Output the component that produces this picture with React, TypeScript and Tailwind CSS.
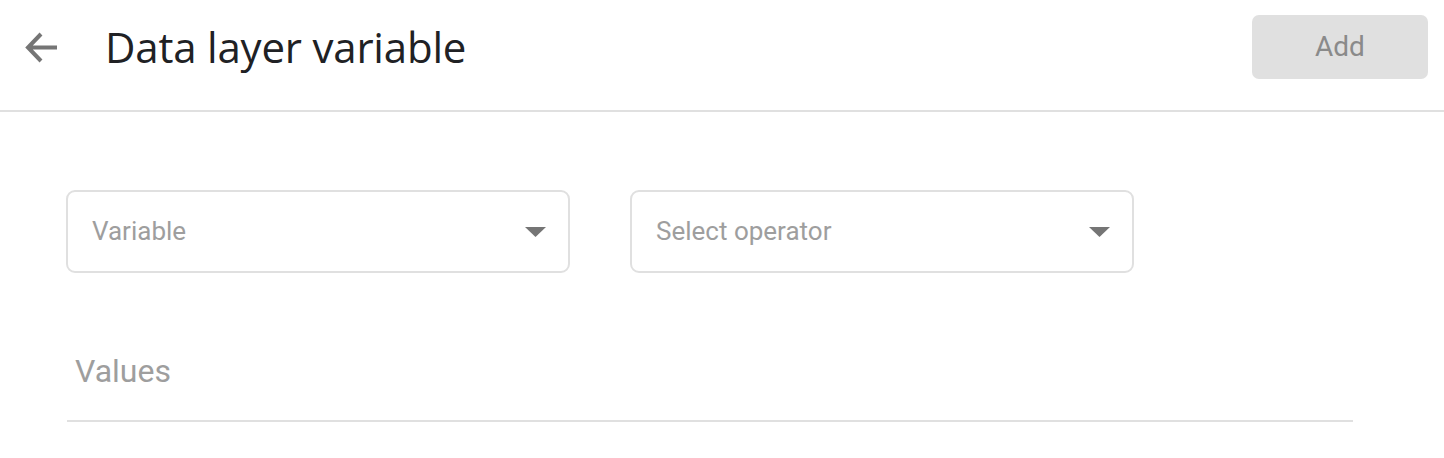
import React from 'react';

function Caret() {
  return (
    <svg width="21" height="10" viewBox="0 0 21 10" className="shrink-0">
      <path d="M0 0h21L10.5 10z" fill="#757575" />
    </svg>
  );
}

function SelectBox({ placeholder }: { placeholder: string }) {
  return (
    <div className="flex items-center justify-between w-[504px] h-[83px] border-2 border-[#e0e0e0] rounded-[9px] pl-[24px] pr-[22px]">
      <span className="text-[26px] text-[#9e9e9e]">{placeholder}</span>
      <Caret />
    </div>
  );
}

export default function App() {
  return (
    <div className="w-[1444px] h-[458px] bg-white font-['Roboto',sans-serif] overflow-hidden">
      <header className="flex items-start h-[112px] border-b-2 border-[#e0e0e0] pl-[24px] pr-[16px] pt-[15px]">
        <div className="flex items-center h-[64px]">
          <svg width="33" height="31" viewBox="0 0 33 31" className="shrink-0">
            <path d="M33 15.5H5M17 2L4 15.5 17 29" fill="none" stroke="#757575" strokeWidth="4" />
          </svg>
          <h1 className="ml-[48px] text-[42px] leading-[64px] text-[#202124] font-['Open_Sans',sans-serif] tracking-[-0.2px]">
            Data layer variable
          </h1>
        </div>
        <button className="ml-auto w-[176px] h-[64px] rounded-[7px] bg-[#e0e0e0] text-[28px] text-[#8a8a8a]">
          Add
        </button>
      </header>
      <main className="pl-[66px] pt-[78px]">
        <div className="flex gap-[60px]">
          <SelectBox placeholder="Variable" />
          <SelectBox placeholder="Select operator" />
        </div>
        <div className="ml-[1px] mt-[77px] w-[1286px] border-b-2 border-[#e0e0e0] pl-[8px] pb-[28px] text-[32px] text-[#9e9e9e] leading-[42px]">
          Values
        </div>
      </main>
    </div>
  );
}
